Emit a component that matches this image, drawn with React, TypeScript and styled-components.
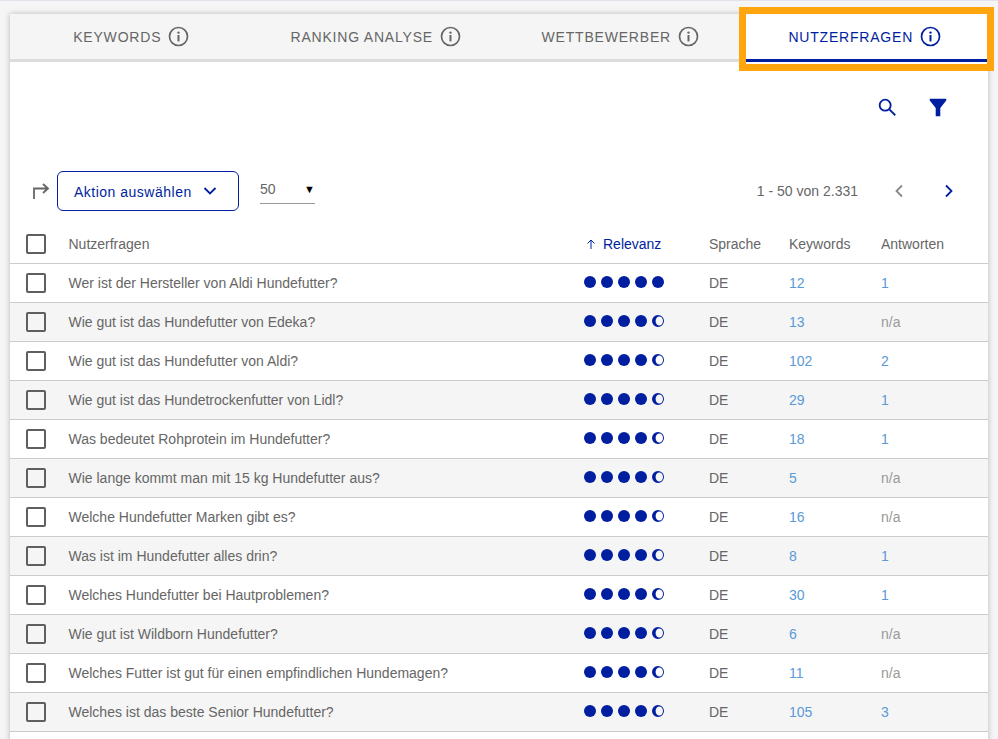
import React from "react";
import styled, { createGlobalStyle } from "styled-components";

const blue = "#001ea0";
const linkBlue = "#5a9ad8";
const grey = "#666";

const rows = [
  ["Wer ist der Hersteller von Aldi Hundefutter?", 5, "12", "1"],
  ["Wie gut ist das Hundefutter von Edeka?", 4, "13", "n/a"],
  ["Wie gut ist das Hundefutter von Aldi?", 4, "102", "2"],
  ["Wie gut ist das Hundetrockenfutter von Lidl?", 4, "29", "1"],
  ["Was bedeutet Rohprotein im Hundefutter?", 4, "18", "1"],
  ["Wie lange kommt man mit 15 kg Hundefutter aus?", 4, "5", "n/a"],
  ["Welche Hundefutter Marken gibt es?", 4, "16", "n/a"],
  ["Was ist im Hundefutter alles drin?", 4, "8", "1"],
  ["Welches Hundefutter bei Hautproblemen?", 4, "30", "1"],
  ["Wie gut ist Wildborn Hundefutter?", 4, "6", "n/a"],
  ["Welches Futter ist gut für einen empfindlichen Hundemagen?", 4, "11", "n/a"],
  ["Welches ist das beste Senior Hundefutter?", 4, "105", "3"],
] as const;

const tabs = ["KEYWORDS", "RANKING ANALYSE", "WETTBEWERBER", "NUTZERFRAGEN"];

const InfoIcon = ({ color }: { color: string }) => (
  <svg width="21" height="21" viewBox="0 0 21 21" fill="none">
    <circle cx="10.5" cy="10.5" r="9" stroke={color} strokeWidth="1.7" />
    <circle cx="10.5" cy="6.6" r="1.2" fill={color} />
    <rect x="9.5" y="9" width="2" height="6.4" fill={color} />
  </svg>
);

const Dots = ({ full }: { full: number }) => (
  <DotRow>
    {[0, 1, 2, 3, 4].map((i) => (
      <svg key={i} width="12" height="12" viewBox="0 0 12 12">
        {i < full ? (
          <circle cx="6" cy="6" r="6" fill={blue} />
        ) : (
          <path
            fillRule="evenodd"
            d="M6 0a6 6 0 1 0 0 12a6 6 0 1 0 0-12zM7.300 1.400a3.700 4.600 0 1 0 0 9.200a3.700 4.600 0 1 0 0-9.200z"
            fill={blue}
          />
        )}
      </svg>
    ))}
  </DotRow>
);

export default function App() {
  return (
    <>
      <GlobalStyle />
      <Page>
        <Card>
          <TabBar>
            {tabs.map((t, i) => (
              <Tab key={t} $active={i === 3}>
                {t}
                <InfoIcon color={i === 3 ? blue : grey} />
              </Tab>
            ))}
          </TabBar>
          <Highlight />
          <IconBar>
            <svg width="22" height="22" viewBox="0 0 24 24" fill="none" stroke={blue} strokeWidth="2">
              <circle cx="10" cy="10" r="6" />
              <path d="M14.500 14.500L21 21" />
            </svg>
            <svg width="22" height="22" viewBox="0 0 24 24" fill={blue}>
              <path d="M3 3h18v2l-6.500 8v9h-5v-9L3 5z" />
            </svg>
          </IconBar>
          <Toolbar>
            <ActionGroup>
              <svg width="18" height="20" viewBox="0 0 18 20" fill="none" stroke={grey} strokeWidth="1.800">
                <path d="M2 18V7.500h13M11 3l5 4.500-5 4.500" />
              </svg>
              <ActionButton>
                <span>Aktion auswählen</span>
                <svg width="16" height="16" viewBox="0 0 16 16" fill="none" stroke={blue} strokeWidth="1.800">
                  <path d="M2.500 5l5.500 5.500L13.500 5" />
                </svg>
              </ActionButton>
              <PageSize>
                50
                <Caret>▼</Caret>
              </PageSize>
            </ActionGroup>
            <Pager>
              <PagerText>1 - 50 von 2.331</PagerText>
              <svg width="12" height="14" viewBox="0 0 12 14" fill="none" stroke="#888" strokeWidth="1.800">
                <path d="M9 1.500L3.500 7 9 12.500" />
              </svg>
              <svg width="12" height="14" viewBox="0 0 12 14" fill="none" stroke={blue} strokeWidth="1.800">
                <path d="M3 1.500L8.500 7 3 12.500" />
              </svg>
            </Pager>
          </Toolbar>
          <HeadRow>
            <Check />
            <span>Nutzerfragen</span>
            <SortHead>
              <svg width="10" height="10" viewBox="0 0 10 10" fill="none" stroke={blue} strokeWidth="1">
                <path d="M5 10V1M1.500 4.500L5 1l3.500 3.500" />
              </svg>
              Relevanz
            </SortHead>
            <span>Sprache</span>
            <span>Keywords</span>
            <span>Antworten</span>
          </HeadRow>
          {rows.map(([q, full, kw, ans], i) => (
            <Row key={q} $odd={i % 2 === 1}>
              <Check />
              <span>{q}</span>
              <Dots full={full} />
              <span>DE</span>
              <NumLink>{kw}</NumLink>
              {ans === "n/a" ? <Muted>n/a</Muted> : <NumLink>{ans}</NumLink>}
            </Row>
          ))}
        </Card>
      </Page>
    </>
  );
}

const GlobalStyle = createGlobalStyle`
  html, body {
    margin: 0;
    height: 100%;
    overflow: hidden;
    background: #f5f5f5;
    font-family: "Liberation Sans", Arial, sans-serif;
  }
`;

const Page = styled.div`
  height: 739px;
  overflow: hidden;
  padding: 14px 10px 0;
  box-sizing: border-box;
  border-top: 1px solid #e2e2ea;
`;

const Card = styled.div`
  position: relative;
  min-height: 800px;
  margin-top: -1px;
  background: #fff;
  box-shadow: 0 0 6px rgba(0, 0, 0, 0.25);
`;

const TabBar = styled.div`
  display: grid;
  grid-template-columns: repeat(4, 1fr);
  height: 48px;
  background: #f5f5f5;
`;

const Tab = styled.div<{ $active: boolean }>`
  display: flex;
  align-items: center;
  justify-content: center;
  gap: 7px;
  padding-right: 2px;
  box-sizing: border-box;
  font-size: 14px;
  letter-spacing: 0.8px;
  color: ${(p) => (p.$active ? blue : grey)};
  background: ${(p) => (p.$active ? "#fff" : "transparent")};
  border-bottom: 3px solid ${(p) => (p.$active ? blue : "#dcdcdc")};
`;

const Highlight = styled.div`
  position: absolute;
  top: -7px;
  right: -6px;
  width: 255px;
  height: 64px;
  box-sizing: border-box;
  border: 7px solid #ffa50d;
  pointer-events: none;
`;

const IconBar = styled.div`
  display: flex;
  justify-content: flex-end;
  align-items: flex-start;
  gap: 29px;
  height: 109px;
  padding: 34px 39px 0 0;
  box-sizing: border-box;
`;

const Toolbar = styled.div`
  display: flex;
  justify-content: space-between;
  align-items: center;
  height: 40px;
  margin-bottom: 14px;
  padding: 0 33px 0 22px;
`;

const ActionGroup = styled.div`
  display: flex;
  align-items: center;
  gap: 7px;
`;

const ActionButton = styled.div`
  display: flex;
  align-items: center;
  gap: 10px;
  width: 182px;
  height: 40px;
  box-sizing: border-box;
  padding-left: 16px;
  border: 1px solid ${blue};
  border-radius: 6px;
  font-size: 14px;
  letter-spacing: 0.5px;
  color: ${blue};

  span {
    padding-top: 2px;
  }
`;

const PageSize = styled.div`
  display: flex;
  justify-content: space-between;
  align-items: center;
  width: 55px;
  height: 29px;
  margin-left: 14px;
  margin-bottom: 4px;
  border-bottom: 1px solid #999;
  box-sizing: border-box;
  font-size: 14px;
  color: ${grey};
`;

const Caret = styled.span`
  font-size: 11px;
  color: #000;
`;

const Pager = styled.div`
  display: flex;
  align-items: center;
  gap: 38px;
`;

const PagerText = styled.span`
  font-size: 14px;
  color: ${grey};
  margin-right: -3px;
`;

const HeadRow = styled.div`
  display: grid;
  grid-template-columns: 58.5px 515.5px 125px 80px 92px 1fr;
  align-items: center;
  height: 39px;
  box-sizing: border-box;
  font-size: 14px;
  color: ${grey};
  border-bottom: 1px solid #ccc;
`;

const Row = styled(HeadRow)<{ $odd: boolean }>`
  background: ${(p) => (p.$odd ? "#f5f5f5" : "#fff")};
`;

const Check = styled.span`
  display: block;
  width: 20px;
  height: 20px;
  margin-left: 16px;
  box-sizing: border-box;
  border: 2px solid #5f5f5f;
  border-radius: 2px;
`;

const SortHead = styled.span`
  display: flex;
  align-items: center;
  gap: 7px;
  padding-left: 2px;
  color: ${blue};
`;

const DotRow = styled.div`
  display: flex;
  gap: 5px;
  margin-top: -2px;
`;

const NumLink = styled.span`
  color: ${linkBlue};
`;

const Muted = styled.span`
  color: #999;
`;
